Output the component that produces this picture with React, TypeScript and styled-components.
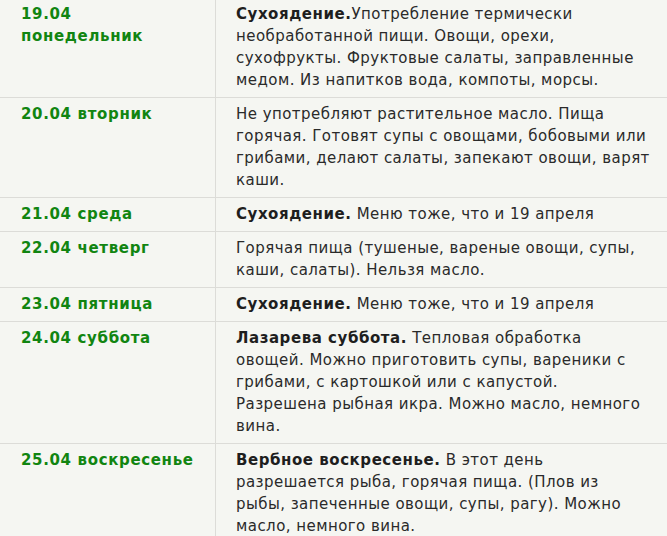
import React from 'react';
import styled, { createGlobalStyle } from 'styled-components';

interface Day {
  date: string;
  title?: string;
  text: string;
}

const days: Day[] = [
  {
    date: '19.04 понедельник',
    title: 'Сухоядение.',
    text: 'Употребление термически необработанной пищи. Овощи, орехи, сухофрукты. Фруктовые салаты, заправленные медом. Из напитков вода, компоты, морсы.',
  },
  {
    date: '20.04 вторник',
    text: 'Не употребляют растительное масло. Пища горячая. Готовят супы с овощами, бобовыми или грибами, делают салаты, запекают овощи, варят каши.',
  },
  { date: '21.04 среда', title: 'Сухоядение.', text: ' Меню тоже, что и 19 апреля' },
  {
    date: '22.04 четверг',
    text: 'Горячая пища (тушеные, вареные овощи, супы, каши, салаты). Нельзя масло.',
  },
  { date: '23.04 пятница', title: 'Сухоядение.', text: ' Меню тоже, что и 19 апреля' },
  {
    date: '24.04 суббота',
    title: 'Лазарева суббота.',
    text: ' Тепловая обработка овощей. Можно приготовить супы, вареники с грибами, с картошкой или с капустой. Разрешена рыбная икра. Можно масло, немного вина.',
  },
  {
    date: '25.04 воскресенье',
    title: 'Вербное воскресенье.',
    text: ' В этот день разрешается рыба, горячая пища. (Плов из рыбы, запеченные овощи, супы, рагу). Можно масло, немного вина.',
  },
];

const GlobalStyle = createGlobalStyle`
  html, body {
    margin: 0;
    padding: 0;
    background: #f5f6f2;
    overflow: hidden;
  }
`;

const Table = styled.table`
  width: 667px;
  margin-top: -2px;
  border-collapse: collapse;
  font-family: 'DejaVu Sans', Verdana, sans-serif;
  font-size: 15px;
  line-height: 22px;
  letter-spacing: 0.45px;
  color: #2a2a2a;
`;

const Row = styled.tr`
  border-bottom: 1px solid #dcdcd8;
`;

const DateCell = styled.td`
  width: 174px;
  padding: 5px 20px 6px 21px;
  vertical-align: top;
  border-right: 1px solid #dcdcd8;
  color: #118511;
  font-weight: bold;
  letter-spacing: 0.65px;
`;

const TextCell = styled.td`
  padding: 5px 14px 6px 20px;
  vertical-align: top;
`;

const Lead = styled.b`
  font-weight: bold;
  color: #1e1e1e;
  letter-spacing: 0.55px;
`;

export default function App() {
  return (
    <>
      <GlobalStyle />
      <Table>
        <tbody>
          {days.map((d) => (
            <Row key={d.date}>
              <DateCell>{d.date}</DateCell>
              <TextCell>
                {d.title && <Lead>{d.title}</Lead>}
                {d.text}
              </TextCell>
            </Row>
          ))}
        </tbody>
      </Table>
    </>
  );
}
